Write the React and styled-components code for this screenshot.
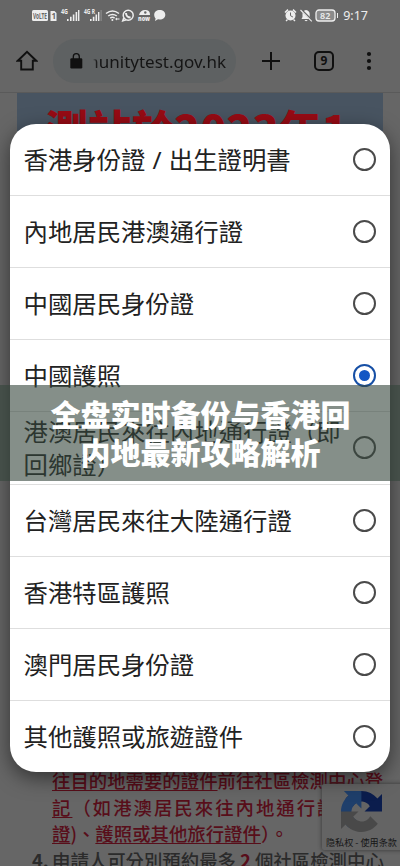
import { useState } from "react";
import styled, { createGlobalStyle } from "styled-components";

const OPTIONS = [
  "香港身份證 / 出生證明書",
  "內地居民港澳通行證",
  "中國居民身份證",
  "中國護照",
  "港澳居民來往內地通行證（即回鄉證）",
  "台灣居民來往大陸通行證",
  "香港特區護照",
  "澳門居民身份證",
  "其他護照或旅遊證件",
];

const StatusIcons = () => (
  <svg width="136" height="14" viewBox="0 0 136 14" fill="#ededed">
    <rect x="0" y="2" width="16" height="11" rx="1.5" />
    <text x="1" y="10.6" fontSize="8" fontWeight="700" fill="#666" textLength="14" lengthAdjust="spacingAndGlyphs">
      VoLTE
    </text>
    <path d="M18.5 3h4l2 2v8h-6z" />
    <text x="19.6" y="11" fontSize="8" fontWeight="700" fill="#666">1</text>
    <text x="29" y="6" fontSize="6.5" fontWeight="700" textLength="7" lengthAdjust="spacingAndGlyphs">4G</text>
    <path d="M35 11h1.6v2H35zM38 8.8h1.6V13H38zM40.8 6.5h1.6V13h-1.6zM43.6 4h1.6v9h-1.6zM46 2h1.4v11H46z" />
    <text x="52" y="6" fontSize="6.5" fontWeight="700" textLength="11" lengthAdjust="spacingAndGlyphs">4G R</text>
    <path d="M58 11h1.6v2H58zM60.8 8.8h1.6V13h-1.6zM63.5 6.5h1.6V13h-1.6zM66 4h1.4v9H66z" />
    <path d="M68.6 2h1v11h-1z" opacity=".35" />
    <g fill="none" stroke="#ededed" strokeWidth="1.5">
      <path d="M74 5.5q6.5-5 13 0M76.2 8q4.3-3.2 8.6 0M78.2 10.2q2.3-1.7 4.4 0" />
      <circle cx="96.2" cy="7.3" r="5" />
      <path d="M91.8 9.7l-1.1 3.2 3.4-1" />
      <path d="M94 5c0 2.5 2 4.6 4.6 4.6" strokeWidth="2" />
    </g>
    <circle cx="80.4" cy="12" r="1" />
    <path d="M83 11l2-1.5v1h2.5v1H85v1z" />
    <path d="M107 7c1-4 4-5.5 7-5 3 .4 4 2 4 5z" />
    <circle cx="113.3" cy="4.5" r="1.2" fill="#666" />
    <text x="106" y="12.8" fontSize="7" fontWeight="900" textLength="12" lengthAdjust="spacingAndGlyphs">now</text>
    <path d="M127.8 2c3.2 0 5.5 2 5.5 4.7s-2.3 4.8-5.5 4.8l-1.8-.2-3 1.7.6-2.6c-.9-.9-1.4-2.1-1.4-3.7C122.2 4 124.6 2 127.8 2z" />
  </svg>
);

const SystemIcons = () => (
  <svg width="55" height="14" viewBox="0 0 55 14" fill="#ededed">
    <path d="M1 4.5L4 1.6M12 4.5L9 1.6" stroke="#ededed" strokeWidth="1.6" />
    <circle cx="6.5" cy="7.5" r="5" />
    <path d="M6.5 4.5v3.2l2.4 1.3" fill="none" stroke="#666" strokeWidth="1" />
    <path d="M2 13l1.5-1.5M11 13l-1.5-1.5" stroke="#ededed" strokeWidth="1.4" />
    <path d="M17.5 11L18.5 9V6c0-2 1.2-3.5 3.5-4 2.5.5 3.7 2 3.7 4v3l1.5 2zM20.7 12h2.8c0 1.5-2.8 1.5-2.8 0z" />
    <path d="M17 1.5L28.5 13" stroke="#666" strokeWidth="2.2" />
    <path d="M16.5 2L27.8 13.3" stroke="#ededed" strokeWidth="1.1" />
    <rect x="32" y="2" width="19" height="11" rx="3" fill="#8b8b8b" stroke="#ededed" strokeWidth="1.3" />
    <text x="36" y="11" fontSize="9" fontWeight="600">82</text>
    <path d="M53 5h1v5h-1z" />
  </svg>
);

const HomeIcon = () => (
  <svg width="22" height="22" viewBox="0 0 22 22" fill="none" stroke="#101010" strokeWidth="1.9">
    <path d="M1.8 10.7L11 1.8l9.2 8.9h-3.4v8.8H5.2v-8.8z" />
  </svg>
);

const LockIcon = () => (
  <svg width="13" height="17" viewBox="0 0 13 17">
    <rect x=".3" y="5.3" width="12" height="10.2" rx="1.2" fill="#101010" />
    <path d="M3.3 6V3.7a3 3 0 0 1 6 0V6" fill="none" stroke="#101010" strokeWidth="1.3" />
  </svg>
);

const RecaptchaLogo = () => (
  <svg width="41" height="41" viewBox="0 0 64 64">
    <path
      d="M64 31.955l-.033-1.37V4.687l-7.16 7.16C50.948 4.674 42.033.093 32.05.093c-10.4 0-19.622 4.96-25.458 12.64l11.736 11.86a15.55 15.55 0 0 1 4.754-5.334c2.05-1.6 4.952-2.906 8.968-2.906.485 0 .86.057 1.135.163 4.976.393 9.288 3.14 11.828 7.124l-8.307 8.307L64 31.953"
      fill="#0b1d4d"
    />
    <path
      d="M31.862.094l-1.37.033H4.594l7.16 7.16C4.58 13.147 0 22.06 0 32.046c0 10.4 4.96 19.622 12.64 25.458L24.5 45.768a15.55 15.55 0 0 1-5.334-4.754c-1.6-2.05-2.906-4.952-2.906-8.968 0-.485.057-.86.163-1.135.393-4.976 3.14-9.288 7.124-11.828l8.307 8.307L31.86.095"
      fill="#1f3f6b"
    />
    <path
      d="M.001 32.045l.033 1.37v25.898l7.16-7.16c5.86 7.173 14.774 11.754 24.76 11.754 10.4 0 19.622-4.96 25.458-12.64l-11.736-11.86a15.55 15.55 0 0 1-4.754 5.334c-2.05 1.6-4.952 2.906-8.968 2.906-.485 0-.86-.057-1.135-.163-4.976-.393-9.288-3.14-11.828-7.124l8.307-8.307L0 32.047"
      fill="#494949"
    />
  </svg>
);

const App = () => {
  const [selected, setSelected] = useState(3);

  return (
    <Screen>
      <GlobalStyle />
      <StatusBar>
        <StatusIcons />
        <StatusRight>
          <SystemIcons />
          <Clock>9:17</Clock>
        </StatusRight>
      </StatusBar>
      <Toolbar>
        <HomeIcon />
        <AddressBar>
          <LockIcon />
          <Url>
            <span>communitytest.gov.hk</span>
          </Url>
        </AddressBar>
        <Actions>
          <svg width="20" height="20" viewBox="0 0 20 20">
            <path d="M10 1v18M1 10h18" stroke="#101010" strokeWidth="2" />
          </svg>
          <TabCount>9</TabCount>
          <svg width="6" height="20" viewBox="0 0 6 20" fill="#101010">
            <circle cx="3" cy="3" r="2.1" />
            <circle cx="3" cy="10" r="2.1" />
            <circle cx="3" cy="17" r="2.1" />
          </svg>
        </Actions>
      </Toolbar>
      <WebPage>
        <Heading>測站於2023年1</Heading>
        <Notice>
          <NoticeLine>
            <u>往目的地需要的證件</u>前往社區檢測中心登
          </NoticeLine>
          <NoticeLine $spacing={2}>
            <u>記</u>（如港澳居民來往內地通行證
          </NoticeLine>
          <NoticeLine>
            <u>證</u>)、<u>護照或其他旅行證件</u>）。
          </NoticeLine>
          <NoticeLine $dark>
            <Num>4.</Num>申請人可分別預約最多 <b>2</b> 個社區檢測中心
          </NoticeLine>
        </Notice>
      </WebPage>
      <Recaptcha>
        <RecaptchaLogo />
        <span>隐私权 - 使用条款</span>
      </Recaptcha>
      <Dialog>
        {OPTIONS.map((text, i) => (
          <Option key={text} onClick={() => setSelected(i)}>
            <OptionText>{text}</OptionText>
            <Radio $checked={selected === i} />
          </Option>
        ))}
      </Dialog>
      <Caption>
        全盘实时备份与香港回
        <br />
        内地最新攻略解析
      </Caption>
    </Screen>
  );
};

const GlobalStyle = createGlobalStyle`
  * {
    box-sizing: border-box;
  }
  body {
    margin: 0;
    font-family: "Noto Sans", "Noto Sans CJK TC", sans-serif;
  }
  svg {
    display: block;
    flex-shrink: 0;
  }
`;

const Screen = styled.div`
  position: relative;
  width: 400px;
  height: 866px;
  overflow: hidden;
  display: flex;
  flex-direction: column;
  background: #666666;
`;

const StatusBar = styled.div`
  height: 30px;
  padding: 0 32px;
  display: flex;
  align-items: center;
  justify-content: space-between;
`;

const StatusRight = styled.div`
  display: flex;
  align-items: center;
  gap: 4px;
`;

const Clock = styled.span`
  padding-top: 2px;
  font-size: 12.5px;
  line-height: 14px;
  color: #ededed;
`;

const Toolbar = styled.div`
  height: 63px;
  padding: 0 28px 0 16px;
  display: flex;
  align-items: center;
  border-bottom: 1px solid #5a5a5a;
`;

const AddressBar = styled.div`
  width: 183px;
  height: 44px;
  margin-left: 15px;
  padding: 0 10px 0 17px;
  border-radius: 22px;
  background: #5e6162;
  display: flex;
  align-items: center;
  gap: 10px;
`;

const Url = styled.div`
  flex: 1;
  overflow: hidden;
  display: flex;
  justify-content: flex-end;
  font-size: 17px;
  color: #151515;
  mask-image: linear-gradient(to right, transparent, #000 4px);
`;

const Actions = styled.div`
  flex: 1;
  margin-left: 25px;
  display: flex;
  align-items: center;
  justify-content: space-between;
`;

const TabCount = styled.div`
  width: 20px;
  height: 20px;
  margin-left: 9px;
  margin-right: 8px;
  border: 2px solid #101010;
  border-radius: 5px;
  font-size: 12px;
  font-weight: 700;
  line-height: 16px;
  text-align: center;
  color: #101010;
`;

const WebPage = styled.div`
  flex: 1;
  display: flex;
  flex-direction: column;
  justify-content: space-between;
`;

const Heading = styled.div`
  height: 120px;
  margin: 0 17px;
  padding: 4px 0 0 28px;
  background: #485461;
  font-family: "Noto Sans CJK TC", sans-serif;
  font-size: 43px;
  font-weight: 900;
  white-space: nowrap;
  color: #970b14;
`;

const Notice = styled.div`
  height: 99px;
  padding-left: 52px;
`;

const NoticeLine = styled.div`
  height: 26.6px;
  font-family: "Noto Sans CJK TC", sans-serif;
  font-size: 18.4px;
  font-weight: 500;
  line-height: 26px;
  white-space: nowrap;
  letter-spacing: ${(props) => props.$spacing || 0}px;
  color: ${(props) => (props.$dark ? "#2b2b2b" : "#580e1a")};
  u {
    text-underline-offset: 2px;
    text-decoration-thickness: 1px;
  }
  b {
    color: #580e1a;
  }
`;

const Num = styled.span`
  display: inline-block;
  width: 20px;
  margin-left: -20px;
  font-weight: 700;
`;

const Recaptcha = styled.div`
  position: absolute;
  left: 322px;
  top: 784px;
  width: 90px;
  height: 66px;
  padding: 7px 0 0 4px;
  border-radius: 2px;
  background: #646464;
  box-shadow: 0 0 4px #333333;
  font-family: "Noto Sans CJK SC", sans-serif;
  font-size: 9.1px;
  line-height: 20px;
  white-space: nowrap;
  color: #151515;
  svg {
    margin-left: 15px;
  }
`;

const Dialog = styled.div`
  position: absolute;
  left: 10px;
  top: 124px;
  width: 380px;
  height: 648px;
  border-radius: 26px;
  background: #ffffff;
  box-shadow: 0 6px 20px rgba(0, 0, 0, 0.5);
  display: flex;
  flex-direction: column;
`;

const Option = styled.div`
  flex: 1;
  padding: 0 14px 0 13px;
  display: flex;
  align-items: center;
  justify-content: space-between;
  border-bottom: 1px solid #dedede;
  &:last-child {
    border-bottom: none;
  }
`;

const OptionText = styled.div`
  width: 324px;
  padding-left: 0.5px;
  font-size: 24.4px;
  line-height: 33px;
  word-spacing: 0.8px;
  color: #222222;
`;

const Radio = styled.div`
  width: 23px;
  height: 23px;
  border-radius: 50%;
  border: 2px solid ${(props) => (props.$checked ? "#164fa5" : "#4a4a4a")};
  display: flex;
  align-items: center;
  justify-content: center;
  &::after {
    content: "";
    width: 11px;
    height: 11px;
    border-radius: 50%;
    background: ${(props) => (props.$checked ? "#1256c4" : "transparent")};
  }
`;

const Caption = styled.div`
  position: absolute;
  left: 0;
  top: 385px;
  width: 400px;
  height: 96px;
  padding: 9px 0 0 1px;
  background: rgba(52, 68, 58, 0.6);
  font-family: "Noto Sans CJK SC", sans-serif;
  font-size: 30px;
  font-weight: 900;
  line-height: 38px;
  text-align: center;
  color: #ffffff;
`;

export default App;
